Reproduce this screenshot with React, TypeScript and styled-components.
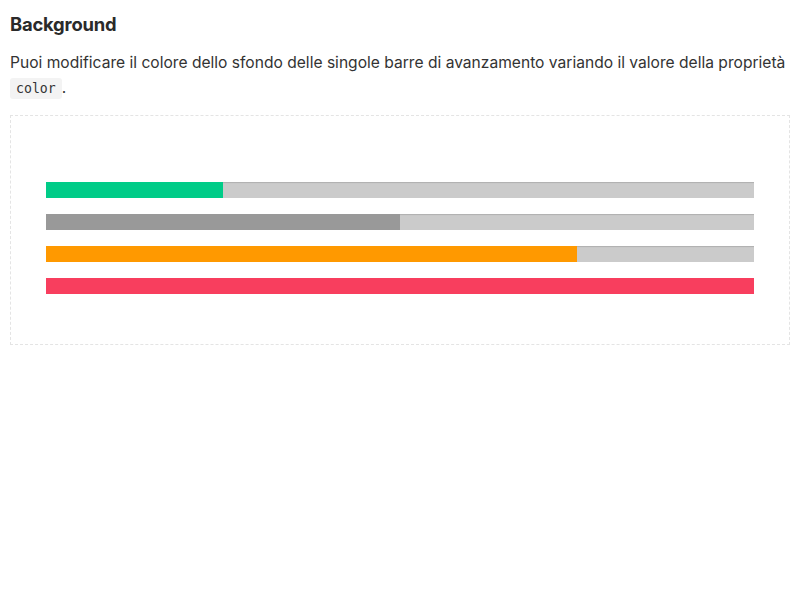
import React from "react";
import styled, { createGlobalStyle } from "styled-components";

const Global = createGlobalStyle`
  html, body { margin: 0; padding: 0; background: #fff; }
  body { font-family: "Inter", "Liberation Sans", sans-serif; color: #333; }
`;

const Page = styled.div`
  padding: 10px 10px;
`;

const Title = styled.h3`
  margin: 2px 0 14px;
  font-size: 18.4px;
  line-height: 24px;
  font-weight: 700;
  color: #2a2a2a;
  letter-spacing: -0.2px;
`;

const Text = styled.p`
  margin: 0 0 14px;
  font-size: 15.6px;
  line-height: 25px;
  color: #333;
`;

const Code = styled.code`
  font-family: "DejaVu Sans Mono", "Liberation Mono", monospace;
  font-size: 13.2px;
  background: #f3f3f3;
  border-radius: 3px;
  padding: 3px 6px;
  color: #333;
`;

const Demo = styled.div`
  border: 1px dashed #e4e4e4;
  padding: 66px 35px 50px;
  display: flex;
  flex-direction: column;
  gap: 16px;
`;

const Track = styled.div`
  height: 16px;
  background: #cbcbcb;
  box-shadow: inset 0 2px 1px -1px #b0b0b0;
  position: relative;
  overflow: hidden;
`;

const Fill = styled.div<{ $color: string }>`
  height: 100%;
  background: ${(p) => p.$color};
`;

const bars = [
  { color: "#00cc88", value: 25 },
  { color: "#999999", value: 50 },
  { color: "#ff9900", value: 75 },
  { color: "#f83e5e", value: 100 },
];

export default function App() {
  return (
    <>
      <Global />
      <Page>
        <Title>Background</Title>
        <Text>
          Puoi modificare il colore dello sfondo delle singole barre di avanzamento variando il valore della proprietà{" "}
          <Code>color</Code>.
        </Text>
        <Demo>
          {bars.map((b, i) => (
            <Track key={i}>
              <Fill $color={b.color} style={{ width: `${b.value}%` }} />
            </Track>
          ))}
        </Demo>
      </Page>
    </>
  );
}
